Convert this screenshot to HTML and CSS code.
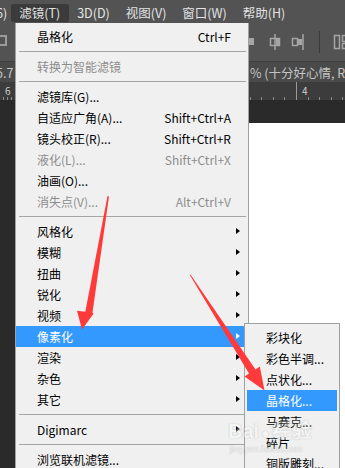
FILE: index.html
```html
<!DOCTYPE html>
<html lang="zh-CN">
<head>
  <meta charset="UTF-8">
  <meta name="viewport" content="width=device-width, initial-scale=1.0">
  <title>滤镜菜单</title>
  <link rel="stylesheet" href="styles.css">
</head>
<body>
  <div class="app">
    <div class="menubar">
      <span class="menubar-item cut">6)</span>
      <span class="menubar-item active">滤镜(T)</span>
      <span class="menubar-item">3D(D)</span>
      <span class="menubar-item">视图(V)</span>
      <span class="menubar-item">窗口(W)</span>
      <span class="menubar-item">帮助(H)</span>
    </div>

    <div class="optionsbar">
      <svg class="opt-left" width="10" height="16" viewBox="0 0 10 16">
        <rect x="-4" y="3" width="10" height="9" fill="none" stroke="#9c9c9c" stroke-width="2"/>
      </svg>
      <div class="opt-icons">
        <svg width="16" height="18" viewBox="0 0 16 18">
          <line x1="3" y1="1" x2="3" y2="17" stroke="#a5a5a5" stroke-width="2"/>
          <rect x="4" y="5" width="6" height="7" fill="#a5a5a5"/>
        </svg>
        <svg width="16" height="18" viewBox="0 0 16 18">
          <line x1="8" y1="1" x2="8" y2="17" stroke="#a5a5a5" stroke-width="1.5"/>
          <rect x="3.5" y="5.5" width="9" height="7" fill="none" stroke="#a5a5a5" stroke-width="1.5"/>
          <rect x="9" y="6" width="3" height="6" fill="#a5a5a5"/>
        </svg>
        <svg width="16" height="18" viewBox="0 0 16 18">
          <line x1="13" y1="1" x2="13" y2="17" stroke="#a5a5a5" stroke-width="1.5"/>
          <rect x="2.5" y="5.5" width="5" height="7" fill="none" stroke="#a5a5a5" stroke-width="1.5"/>
          <rect x="8" y="6" width="4" height="6" fill="#a5a5a5"/>
        </svg>
        <span class="opt-sep"></span>
        <svg width="16" height="18" viewBox="0 0 16 18">
          <rect x="1.5" y="2.5" width="5" height="13" fill="none" stroke="#a5a5a5" stroke-width="1.5"/>
          <rect x="9.5" y="2.5" width="5" height="6" fill="none" stroke="#a5a5a5" stroke-width="1.5"/>
          <rect x="9.5" y="10.5" width="5" height="5" fill="none" stroke="#a5a5a5" stroke-width="1.5"/>
        </svg>
      </div>
    </div>

    <div class="tabbar">
      <span class="tab-left">5.7</span>
      <span class="tab-right">% (十分好心情, RGB/8)</span>
    </div>

    <div class="ruler">
      <div class="ruler-left"><span>6</span></div>
      <div class="ruler-mid"></div>
      <div class="ruler-right"><span>4</span></div>
    </div>

    <div class="workspace">
      <div class="canvas"></div>
    </div>
  </div>

  <div class="menu">
    <div class="item"><span class="label">晶格化</span><span class="key">Ctrl+F</span></div>
    <div class="sep"></div>
    <div class="item disabled"><span class="label">转换为智能滤镜</span></div>
    <div class="sep"></div>
    <div class="item"><span class="label">滤镜库(G)...</span></div>
    <div class="item"><span class="label">自适应广角(A)...</span><span class="key">Shift+Ctrl+A</span></div>
    <div class="item"><span class="label">镜头校正(R)...</span><span class="key">Shift+Ctrl+R</span></div>
    <div class="item disabled"><span class="label">液化(L)...</span><span class="key">Shift+Ctrl+X</span></div>
    <div class="item"><span class="label">油画(O)...</span></div>
    <div class="item disabled"><span class="label">消失点(V)...</span><span class="key">Alt+Ctrl+V</span></div>
    <div class="sep"></div>
    <div class="item sub"><span class="label">风格化</span></div>
    <div class="item sub"><span class="label">模糊</span></div>
    <div class="item sub"><span class="label">扭曲</span></div>
    <div class="item sub"><span class="label">锐化</span></div>
    <div class="item sub"><span class="label">视频</span></div>
    <div class="item sub selected"><span class="label">像素化</span></div>
    <div class="item sub"><span class="label">渲染</span></div>
    <div class="item sub"><span class="label">杂色</span></div>
    <div class="item sub"><span class="label">其它</span></div>
    <div class="sep"></div>
    <div class="item sub"><span class="label">Digimarc</span></div>
    <div class="sep"></div>
    <div class="item"><span class="label">浏览联机滤镜...</span></div>
  </div>

  <div class="submenu">
    <div class="item"><span class="label">彩块化</span></div>
    <div class="item"><span class="label">彩色半调...</span></div>
    <div class="item"><span class="label">点状化...</span></div>
    <div class="item selected"><span class="label">晶格化...</span></div>
    <div class="item"><span class="label">马赛克...</span></div>
    <div class="item"><span class="label">碎片</span></div>
    <div class="item"><span class="label">铜版雕刻...</span></div>
  </div>

  <div class="watermark">
    <div class="wm-logo">Bai<span class="wm-paw">●</span>经验</div>
    <div class="wm-url">jingyan.baidu.com</div>
  </div>

  <svg class="arrows" width="345" height="468" viewBox="0 0 345 468">
    <polygon fill="#ff3a3a" points="107.5,196 109,196.5 92.5,312.5 93.5,313.8 82,329.5 77,310.8 85.3,311.8"/>
    <polygon fill="#ff3a3a" points="189.5,274.5 190.8,275 255.5,369.5 259.8,366.5 264.5,390.5 244.5,376.5 249,373.5"/>
  </svg>
</body>
</html>
```

FILE: styles.css
```css
body {
  margin: 0;
  width: 345px;
  height: 468px;
  overflow: hidden;
  position: relative;
  font-family: "Noto Sans CJK SC", "Noto Sans", sans-serif;
  font-size: 12px;
  background-color: #282828;
}

.app {
  display: flex;
  flex-direction: column;
  height: 468px;
}

/* top menu bar */
.menubar {
  height: 23px;
  background-color: #535353;
  display: flex;
  align-items: center;
  color: #e2e2e2;
  font-size: 12.5px;
}

.menubar-item {
  height: 18px;
  line-height: 18px;
  padding: 0 8px;
  margin-top: 3px;
  white-space: nowrap;
}

.menubar-item.cut {
  margin-left: -12px;
  padding-right: 4px;
}

.menubar-item.active {
  background-color: #3b3b3b;
  border-radius: 2px;
  padding: 0 9px 0 8px;
}

/* options bar */
.optionsbar {
  height: 38px;
  background-color: #535353;
  border-bottom: 1px solid #3e3e3e;
  display: flex;
  align-items: center;
  justify-content: space-between;
}

.opt-left {
  margin-top: -2px;
}

.opt-icons {
  display: flex;
  align-items: center;
  gap: 7px;
  margin-right: -4px;
}

.opt-sep {
  width: 1px;
  height: 22px;
  background-color: #3a3a3a;
  margin: 0 6px;
}

/* document tab */
.tabbar {
  height: 20px;
  background-color: #4a4a4a;
  display: flex;
  align-items: center;
  color: #c4c4c4;
  font-size: 12.5px;
  white-space: nowrap;
  overflow: hidden;
}

.tab-left {
  margin-left: -4px;
}

.tab-right {
  margin-left: auto;
  width: 95px;
  overflow: hidden;
}

/* ruler */
.ruler {
  height: 18px;
  display: flex;
  background-color: #3c3c3c;
  color: #cfcfcf;
  font-size: 10px;
}

.ruler-left {
  width: 15px;
  border-right: 1px solid #5a5a5a;
  background: repeating-linear-gradient(90deg, transparent 0 3px, #8a8a8a 3px 4px) bottom / 100% 3px no-repeat;
}

.ruler-left span,
.ruler-right span {
  display: block;
  padding: 1px 0 0 5px;
}

.ruler-mid {
  flex: 1;
  background: repeating-linear-gradient(270deg, transparent 0 10.6px, #8a8a8a 10.6px 11.6px) bottom / 100% 3px no-repeat;
}

.ruler-right {
  width: 48px;
  border-left: 1px solid #9a9a9a;
  background: repeating-linear-gradient(90deg, transparent 0 10.6px, #8a8a8a 10.6px 11.6px) bottom / 100% 3px no-repeat;
}

.workspace {
  flex: 1;
  background-color: #2a2a2a;
  display: flex;
  flex-direction: column;
}

.canvas {
  flex: 1;
  margin: 23px 0 0 30px;
  background-color: #ffffff;
}

/* dropdown menus */
.menu,
.submenu {
  position: absolute;
  background-color: #f0f0f0;
  border: 1px solid #a0a0a0;
  color: #000000;
}

.menu {
  left: 15px;
  top: 23px;
  width: 232px;
  height: 460px;
  padding-top: 3px;
  border-top: none;
}

.submenu {
  left: 244px;
  top: 323px;
  width: 94px;
  height: 160px;
  padding-top: 3px;
}

.item {
  position: relative;
  height: 21px;
  display: flex;
  align-items: center;
  padding: 0 17px 0 21px;
  white-space: nowrap;
}

.item .label {
  flex: 1;
}

.item .key {
  text-align: right;
}

.item.disabled {
  color: #8d8d8d;
}

.item.sub::after {
  content: "";
  position: absolute;
  right: 8px;
  top: 7px;
  border-left: 4px solid #000000;
  border-top: 3.5px solid transparent;
  border-bottom: 3.5px solid transparent;
}

.item.selected {
  background-color: #3399ff;
  color: #ffffff;
}

.item.selected::after {
  border-left-color: #ffffff;
}

.submenu .item {
  padding-left: 19px;
  margin: 0 2px;
}

.sep {
  height: 1px;
  background-color: #a5a5a5;
  margin: 4px 2px 4px 3px;
}

/* watermark */
.watermark {
  position: absolute;
  left: 228px;
  top: 420px;
  opacity: 0.35;
  color: #ffffff;
  text-shadow: 0 0 1px #7a7a7a, 0 0 1px #7a7a7a;
}

.wm-logo {
  font-family: "Liberation Sans", sans-serif;
  font-size: 20px;
  font-weight: bold;
  line-height: 22px;
}

.wm-paw {
  font-size: 14px;
  margin: 0 2px;
}

.wm-url {
  font-family: "Liberation Sans", sans-serif;
  font-size: 9px;
  margin-left: 2px;
}

.arrows {
  position: absolute;
  left: 0;
  top: 0;
  pointer-events: none;
}
```
